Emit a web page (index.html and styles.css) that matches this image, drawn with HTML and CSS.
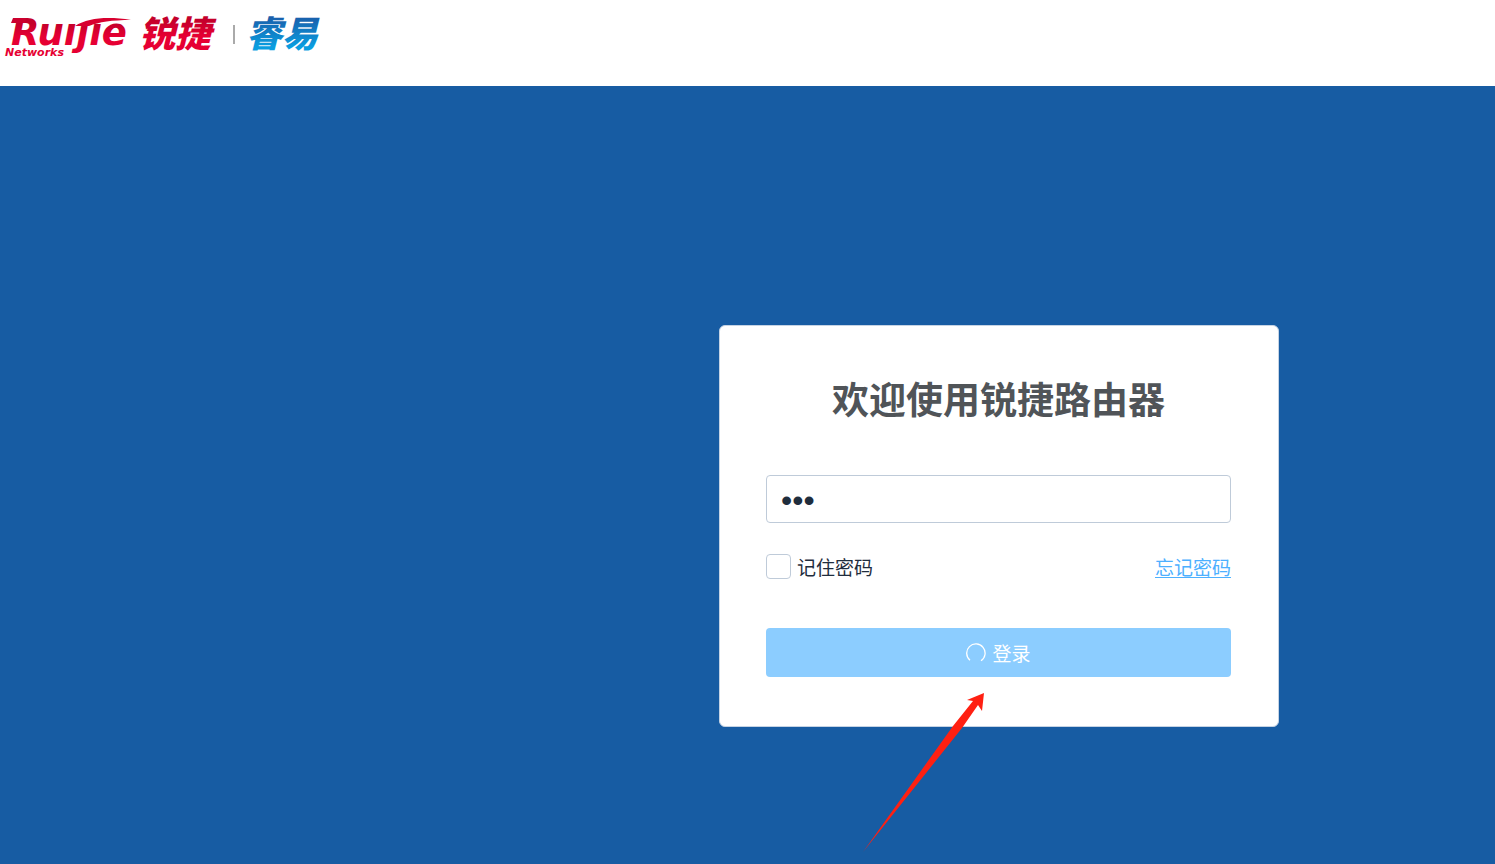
FILE: index.html
```
<!DOCTYPE html>
<html lang="zh-CN">
<head>
    <meta charset="UTF-8">
    <meta name="viewport" content="width=device-width, initial-scale=1.0">
    <title>锐捷路由器</title>
    <link rel="stylesheet" href="styles.css">
</head>
<body>
    <header class="header">
        <svg class="logo" width="330" height="64" viewBox="0 0 330 64" role="img" aria-label="Ruijie Networks 锐捷 睿易">
            <defs>
                <linearGradient id="red" x1="0" y1="0" x2="0" y2="1">
                    <stop offset="0.3" stop-color="#c4002b"/>
                    <stop offset="0.6" stop-color="#e60033"/>
                </linearGradient>
                <linearGradient id="blue" x1="0" y1="0" x2="0" y2="1">
                    <stop offset="0.2" stop-color="#1a5ba8"/>
                    <stop offset="0.8" stop-color="#0a9ee0"/>
                </linearGradient>
            </defs>
            <text class="logo-latin" x="11" y="45" fill="url(#red)">Ruijie</text>
            <path d="M13 18H26L25 23H11Z" fill="#cc002e"/>
            <!-- swoosh in place of the dots -->
            <path d="M67 11H111V21L103 23H65Z" fill="#fff"/>
            <path d="M75 26C88 18 107 16 131 20C112 20 99 22 89 26Z" fill="#d8002f"/>
            <text class="logo-sub" x="5" y="56" fill="#e60033">Networks</text>
            <text class="logo-cjk" x="139" y="47" fill="url(#red)">锐捷</text>
            <path d="M234 25V44" stroke="#aaa" stroke-width="2"/>
            <text class="logo-cjk" x="246" y="47" fill="url(#blue)">睿易</text>
        </svg>
    </header>
    <main class="main">
        <form class="login-card">
            <h1 class="title">欢迎使用锐捷路由器</h1>
            <input class="password" type="password" value="123" aria-label="密码">
            <div class="options">
                <label class="remember">
                    <input type="checkbox" class="checkbox">
                    记住密码
                </label>
                <a class="forgot" href="#">忘记密码</a>
            </div>
            <button class="login-button" type="button">
                <svg class="spinner" width="20" height="20" viewBox="0 0 20 20">
                    <path d="M4 17.2A9.2 9.2 0 1 1 15 17.8" fill="none" stroke="#fff" stroke-width="1.3"/>
                </svg>
                登录
            </button>
            <svg class="arrow" width="124" height="162" viewBox="0 0 124 162">
                <path d="M0 160L90 34L110 9L104 8L121 1L119 19L115 13L99 36Z" fill="#ff2012"/>
            </svg>
        </form>
    </main>
</body>
</html>
```
FILE: styles.css
```
* {
    box-sizing: border-box;
}

body {
    margin: 0;
    min-height: 100vh;
    display: flex;
    flex-direction: column;
    font-family: "Noto Sans CJK SC", sans-serif;
    font-size: 19px;
    color: #1f2d3d;
    background-color: #175ca3;
}

.header {
    height: 86px;
    background-color: white;
}

.logo {
    display: block;
}

.logo-latin {
    font: italic bold 37px "DejaVu Sans", sans-serif;
}

.logo-sub {
    font: italic bold 11px "DejaVu Sans", sans-serif;
}

.logo-cjk {
    font: italic 900 36px "Noto Sans CJK SC", sans-serif;
}

.main {
    flex: 1;
    display: flex;
    justify-content: flex-end;
    align-items: flex-start;
    padding: 239px 216px 0 20px;
}

.login-card {
    position: relative;
    width: 100%;
    max-width: 560px;
    padding: 47px 47px 49px 46px;
    background-color: white;
    border: 1px solid #c5d3e4;
    border-radius: 6px;
}

.title {
    margin: 0 0 52px;
    font-size: 37px;
    line-height: 50px;
    text-align: center;
    color: #505458;
}

.password {
    display: block;
    width: 100%;
    height: 48px;
    padding: 2px 14px 0;
    border: 1px solid #bfcbd9;
    border-radius: 4px;
    font-family: "Liberation Sans", sans-serif;
    font-size: 32px;
    color: #1f2d3d;
}

.options {
    display: flex;
    justify-content: space-between;
    align-items: center;
    height: 24px;
    margin: 31px 0 50px;
}

.remember {
    display: flex;
    align-items: center;
    gap: 6px;
}

.checkbox {
    appearance: none;
    width: 25px;
    height: 25px;
    margin: 0;
    border: 1px solid #bfcbd9;
    border-radius: 4px;
}

.forgot {
    color: #4db0ff;
    text-underline-offset: 2px;
}

.login-button {
    display: flex;
    justify-content: center;
    align-items: center;
    gap: 6px;
    width: 100%;
    height: 49px;
    padding: 0;
    border: none;
    border-radius: 4px;
    font: inherit;
    color: white;
    background-color: #8ccdff;
}

.arrow {
    position: absolute;
    left: 143px;
    top: 366px;
}
```
